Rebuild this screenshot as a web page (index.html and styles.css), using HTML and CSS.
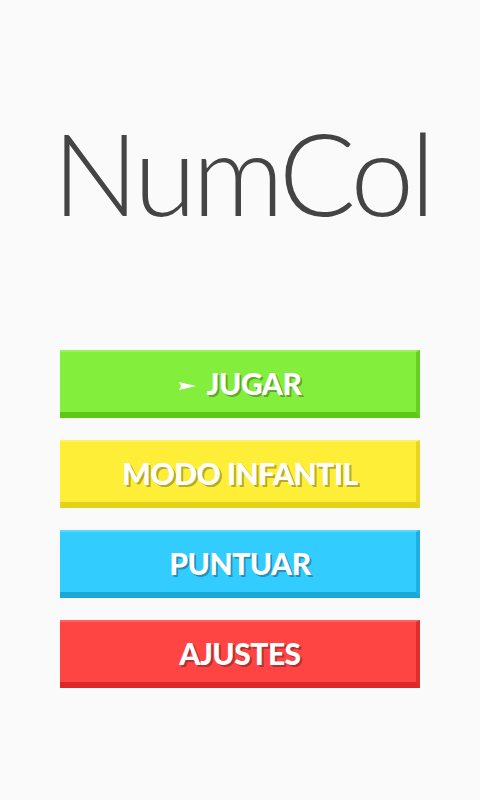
FILE: index.html
```html
<!DOCTYPE html>
<html lang="es">
<head>
<meta charset="utf-8">
<link rel="stylesheet" href="styles.css">
</head>
<body>
<main class="screen">
  <h1 class="title">NumCol</h1>
  <nav class="menu">
    <div class="btn btn-green"><svg class="arrow" width="17" height="8" viewBox="0 0 17 8"><polygon points="0,0 17,4 0,8 2,4" fill="#fff"/></svg><span>JUGAR</span></div>
    <div class="btn btn-yellow"><span>MODO INFANTIL</span></div>
    <div class="btn btn-blue"><span>PUNTUAR</span></div>
    <div class="btn btn-red"><span>AJUSTES</span></div>
  </nav>
</main>
</body>
</html>
```
FILE: styles.css
```css
html, body {
  margin: 0;
  padding: 0;
  background: #fafafa;
}
.screen {
  width: 480px;
  height: 800px;
  display: flex;
  flex-direction: column;
  align-items: center;
}
.title {
  margin: 107px 0 0 0;
  padding-left: 4px;
  font-family: Lato, "Liberation Sans", sans-serif;
  font-weight: 300;
  font-size: 114px;
  line-height: 130px;
  color: #444444;
  letter-spacing: -4px;
}
.menu {
  margin-top: 113px;
  width: 360px;
  display: flex;
  flex-direction: column;
  gap: 22px;
}
.btn {
  height: 68px;
  box-sizing: border-box;
  display: flex;
  align-items: center;
  justify-content: center;
  gap: 11px;
  font-family: Lato, "Liberation Sans", sans-serif;
  font-weight: 900;
  font-size: 30px;
  letter-spacing: -0.5px;
  color: #ffffff;
  text-shadow: 2px 2px 0 rgba(0,0,0,0.3);
  border-top: 2px solid;
  border-right: 4px solid;
  border-bottom: 6px solid;
  padding-left: 4px;
  padding-top: 2px;
}
.arrow { margin-top: 6px; }
.btn-green { background: #84ee3c; border-color: #9af25e #66d01e #5cc915 #84ee3c; }
.btn-yellow { background: #ffee38; border-color: #fff25e #e8d522 #e6d01c #ffee38; }
.btn-blue { background: #33ccff; border-color: #5cd6ff #1eb0e0 #1aa8d6 #33ccff; }
.btn-red { background: #ff4444; border-color: #ff6262 #e02e2e #dc2828 #ff4444; }
```
